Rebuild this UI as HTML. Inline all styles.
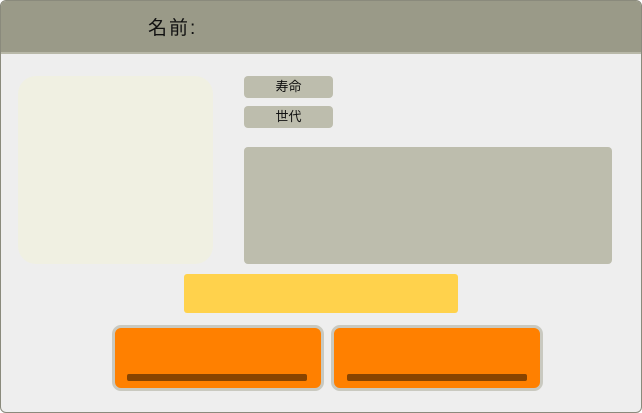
<!DOCTYPE html>
<html><head><meta charset="utf-8"><style>
html,body{margin:0;padding:0;width:642px;height:413px;overflow:hidden;background:#fff;}
.win{position:absolute;left:0;top:0;width:640px;height:411px;border:1px solid #8a8a7c;border-radius:6px;background:#eeeeee;overflow:hidden;}
.hdr{position:absolute;left:0;top:0;width:640px;height:51px;background:#9a9a88;border-bottom:2px solid #b8b8a8;}
.title{position:absolute;left:147px;top:12px;font:19px "Liberation Sans","Noto Sans CJK JP",sans-serif;color:#111;letter-spacing:2px;}
.pic{position:absolute;left:17px;top:75px;width:195px;height:188px;background:#f0f0e2;border-radius:18px;}
.tag{position:absolute;left:243px;width:89px;height:22px;background:#bdbdad;border-radius:4px;text-align:center;font:13px/22px "Liberation Sans","Noto Sans CJK JP",sans-serif;color:#111;}
.box{position:absolute;left:243px;top:146px;width:368px;height:117px;background:#bdbdad;border-radius:4px;}
.yel{position:absolute;left:183px;top:273px;width:274px;height:39px;background:#ffd24c;border-radius:3px;}
.btn{position:absolute;top:324px;width:206px;height:60px;background:#ff8000;border:3px solid #c9c9c0;border-radius:9px;}
.bar{position:absolute;left:12px;top:46px;width:180px;height:7px;background:#884400;border-radius:2px;}
</style></head><body>
<div class="win">
<div class="hdr"><div class="title">名前:</div></div>
<div class="pic"></div>
<div class="tag" style="top:75px">寿命</div>
<div class="tag" style="top:105px">世代</div>
<div class="box"></div>
<div class="yel"></div>
<div class="btn" style="left:111px"><div class="bar"></div></div>
<div class="btn" style="left:330px"><div class="bar" style="left:13px"></div></div>
</div>
</body></html>
